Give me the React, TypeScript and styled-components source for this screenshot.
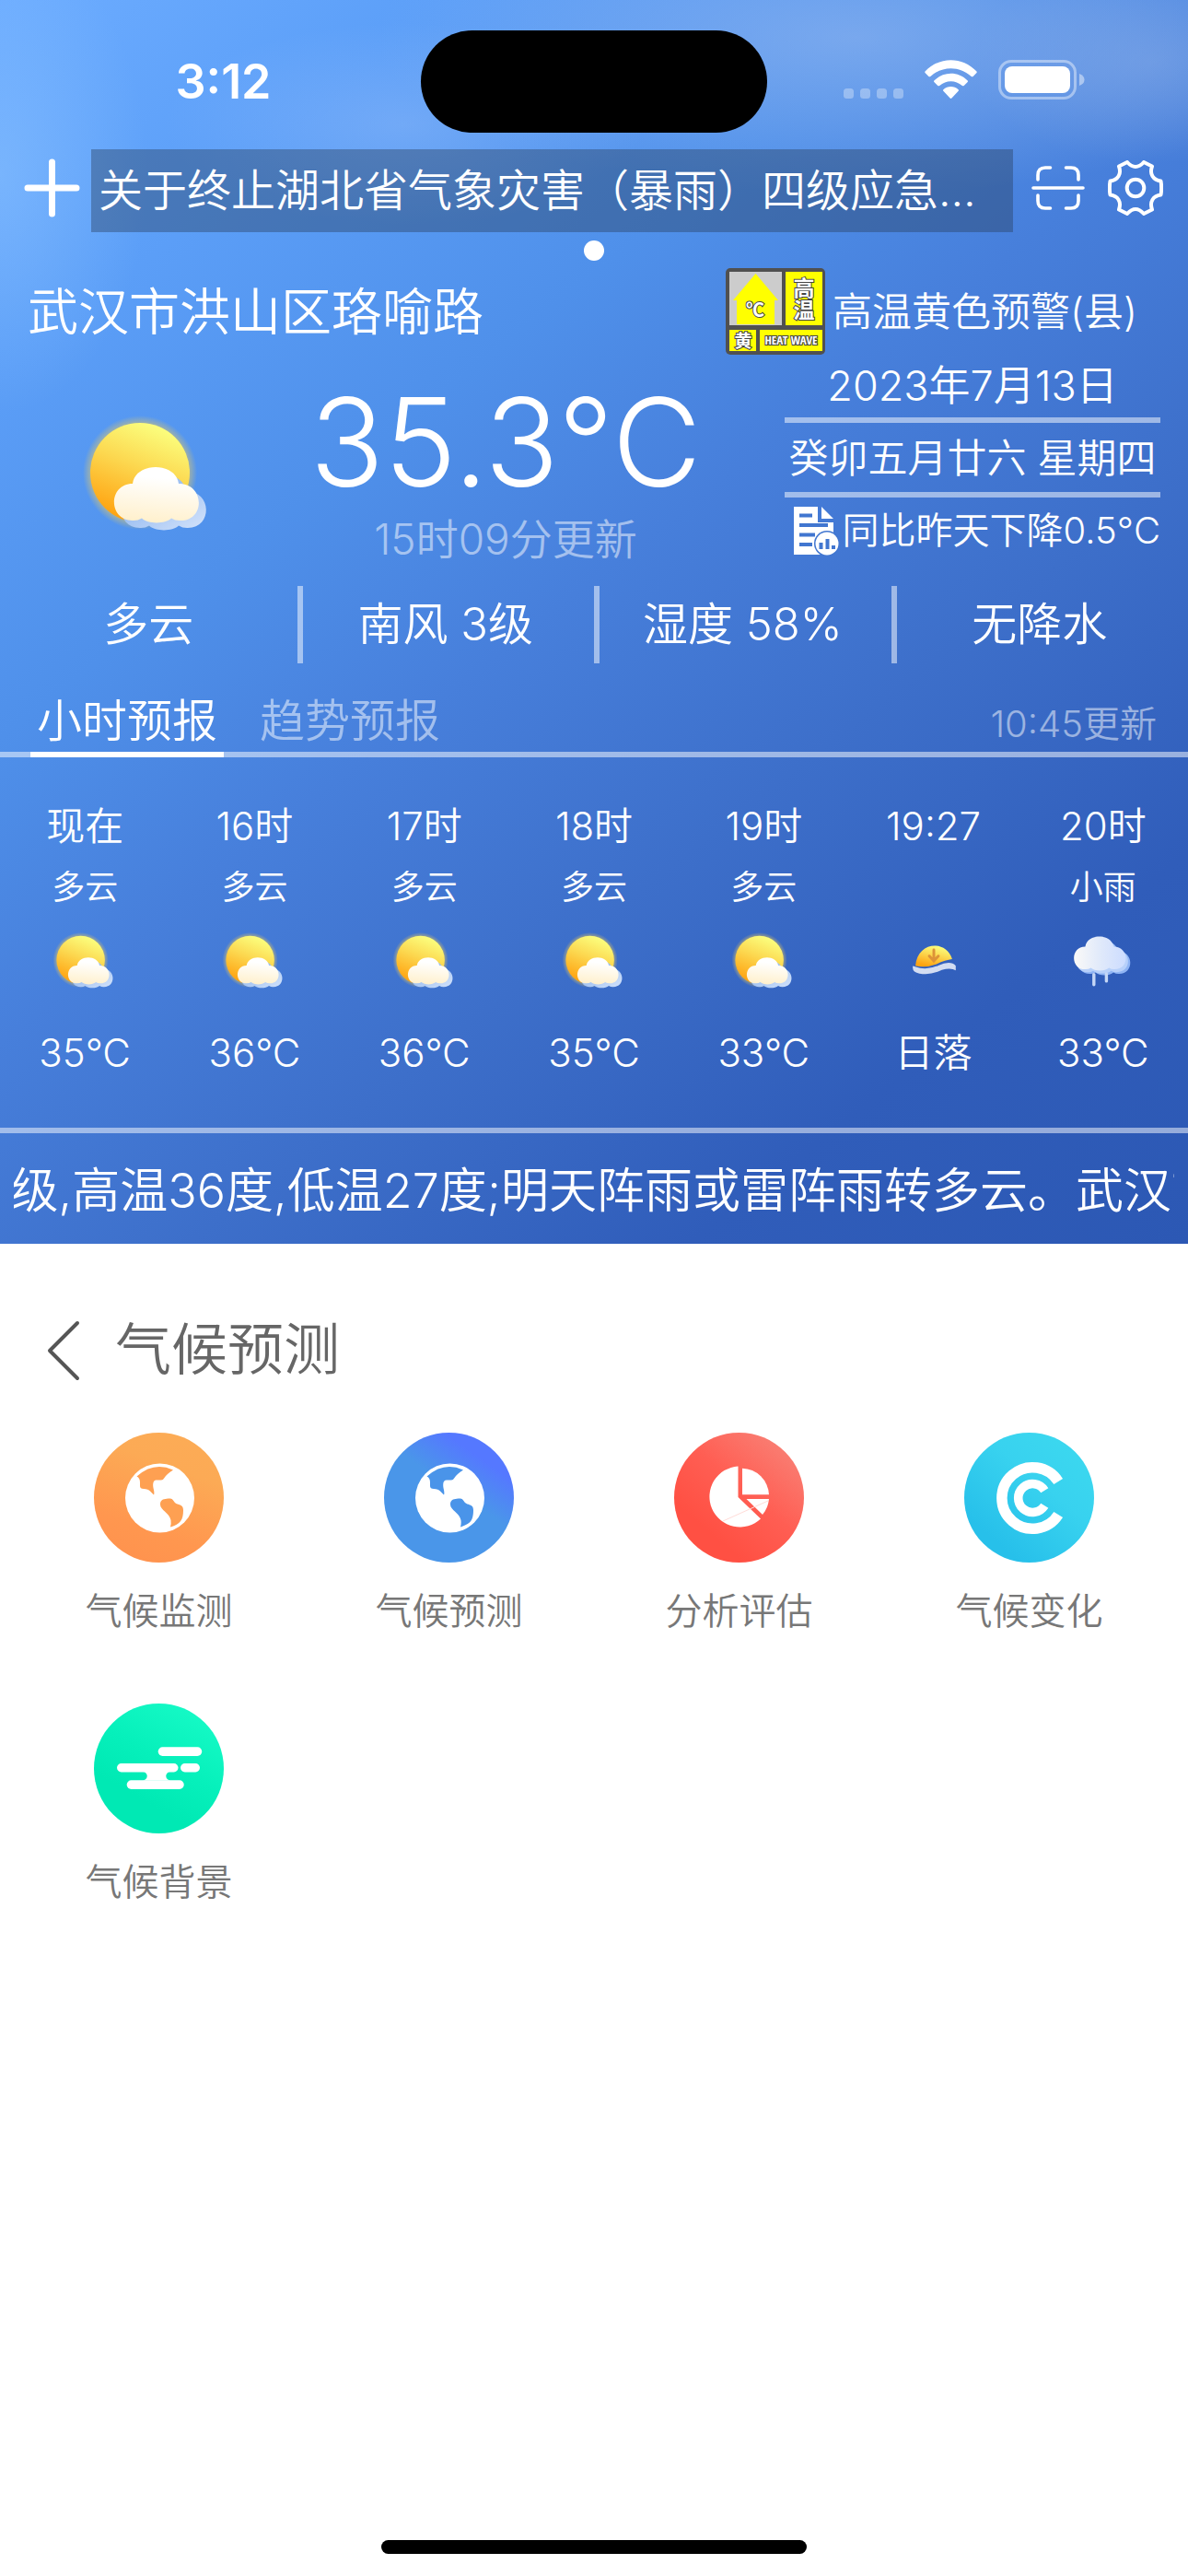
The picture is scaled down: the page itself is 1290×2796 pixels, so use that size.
import React from "react";
import styled, { createGlobalStyle } from "styled-components";

const GlobalStyle = createGlobalStyle`
  *, *::before, *::after { box-sizing: border-box; }
  body {
    margin: 0;
    background: #fff;
    color: #fff;
    font-family: Inter, "Noto Sans CJK SC", sans-serif;
    font-weight: 350;
  }
  button {
    padding: 0;
    border: 0;
    background: none;
    color: inherit;
    font: inherit;
    cursor: pointer;
  }
  a { color: inherit; text-decoration: none; }
  ul { margin: 0; padding: 0; list-style: none; }
  h1, h2, p { margin: 0; font-weight: inherit; }
  svg { display: block; flex: none; }
`;

const rule = "rgba(255, 255, 255, 0.5)";

const Page = styled.div`
  display: flex;
  flex-direction: column;
  min-height: 100vh;
`;

const Hero = styled.header`
  background:
    radial-gradient(ellipse 520px 170px at 72% 3%, rgba(160, 190, 240, 0.5), transparent),
    radial-gradient(ellipse 260px 110px at 34% 10%, rgba(150, 190, 250, 0.4), transparent),
    radial-gradient(ellipse 160px 260px at 0% 14%, rgba(140, 195, 255, 0.5), transparent),
    radial-gradient(ellipse 200px 110px at 97% 5%, rgba(150, 180, 230, 0.35), transparent),
    linear-gradient(142deg, #6cacff 0%, #5c9ff8 16%, #4f90ea 34%, #477fdb 48%, #3d6fca 64%, #305dba 82%, #2c58b4 100%);
`;

const StatusBar = styled.div`
  display: grid;
  grid-template-columns: 1fr 376px 1fr;
  align-items: center;
  height: 162px;
  padding-top: 15px;
`;

const Clock = styled.time`
  padding-left: 28px;
  text-align: center;
  font-size: 52px;
  line-height: 60px;
  font-weight: 600;
`;

const Island = styled.div`
  height: 111px;
  border-radius: 56px;
  background: #000;
`;

const StatusIcons = styled.div`
  display: flex;
  align-items: center;
  margin-bottom: 4px;
  padding-left: 83px;
  gap: 23px;
`;

const Toolbar = styled.nav`
  display: flex;
  align-items: center;
  padding: 0 27px 0 26px;
`;

const IconButton = styled.button<{ $gap: number }>`
  display: flex;
  flex: none;
  margin-left: ${(p) => p.$gap}px;
`;

const ToolButton = styled(IconButton)`
  margin-bottom: 6px;
`;

const Ticker = styled.a`
  flex: 1;
  min-width: 0;
  margin-left: 12px;
  padding: 0 8px;
  overflow: hidden;
  white-space: nowrap;
  text-overflow: ellipsis;
  background: rgba(40, 60, 90, 0.4);
  font-size: 48px;
  line-height: 90px;
`;

const PageDot = styled.div`
  width: 22px;
  height: 22px;
  margin: 9px auto 8px;
  border-radius: 50%;
  background: #fff;
`;

const PlaceRow = styled.div`
  display: flex;
  align-items: center;
  justify-content: space-between;
  padding: 0 55px 0 30px;
`;

const Place = styled.h1`
  font-size: 55px;
  line-height: 94px;
`;

const Alert = styled.a`
  display: flex;
  align-items: center;
  gap: 8px;
  font-size: 43px;
  line-height: 94px;
`;

const Current = styled.section`
  display: grid;
  grid-template-columns: 322px 1fr 408px;
  padding-right: 30px;
`;

const CurrentIcon = styled.div`
  display: flex;
  justify-content: center;
  padding-top: 62px;
`;

const Reading = styled.div`
  padding: 30px 76px 0 0;
  text-align: center;
`;

const Temperature = styled.p`
  font-size: 133px;
  line-height: 130px;
  white-space: nowrap;
`;

const Updated = styled.p`
  font-size: 46px;
  line-height: 80px;
  opacity: 0.5;
`;

const Dates = styled.div`
  text-align: center;
  font-size: 43px;
  white-space: nowrap;
`;

const DateLine = styled.p`
  height: 81px;
  border-bottom: 6px solid ${rule};
  line-height: 76px;

  &:first-child {
    height: 74px;
    font-size: 45px;
    line-height: 68px;
  }
`;

const Compare = styled.p`
  display: flex;
  align-items: center;
  justify-content: flex-end;
  gap: 4px;
  font-size: 40px;
  line-height: 72px;
`;

const Stats = styled.ul`
  display: grid;
  grid-template-columns: repeat(4, 1fr);
  margin-top: 11px;
`;

const Stat = styled.li`
  text-align: center;
  font-size: 49px;
  line-height: 84px;

  & + & {
    padding-right: 6px;
    border-left: 6px solid ${rule};
  }
`;

const Tabs = styled.div`
  display: flex;
  align-items: flex-end;
  margin-top: 30px;
  padding: 0 34px 0 33px;
  gap: 32px;
  box-shadow: inset 0 -6px ${rule};
`;

const Tab = styled.button<{ $active?: boolean }>`
  width: 210px;
  border-bottom: 6px solid ${(p) => (p.$active ? "#fff" : "transparent")};
  color: ${(p) => (p.$active ? "#fff" : rule)};
  font-size: 49px;
  line-height: 66px;
`;

const TabNote = styled.p`
  margin-left: auto;
  color: ${rule};
  font-size: 40px;
  line-height: 72px;
`;

const Hours = styled.ul`
  display: grid;
  grid-template-columns: repeat(7, 1fr);
  padding: 40px 0 46px;
  border-bottom: 6px solid ${rule};
`;

const Hour = styled.li`
  display: flex;
  flex-direction: column;
  align-items: center;
  font-size: 42px;
  line-height: 70px;
  white-space: nowrap;
`;

const Sky = styled.span`
  height: 62px;
  font-size: 36px;
  line-height: 62px;
`;

const HourIcon = styled.span`
  margin: 16px 0 30px;
`;

const Marquee = styled.div`
  display: flex;
  justify-content: center;
  height: 120px;
  margin: 0 15px;
  overflow: hidden;
  white-space: nowrap;
  font-size: 52px;
  line-height: 126px;
`;

const MarqueeText = styled.p`
  padding-left: 14px;
`;

const Climate = styled.main`
  flex: 1;
  color: #777;
`;

const ClimateHead = styled.div`
  display: flex;
  align-items: center;
  gap: 36px;
  padding: 70px 50px 0;
  color: #666;
`;

const ClimateTitle = styled.h2`
  font-size: 61px;
  line-height: 90px;
`;

const Grid = styled.ul`
  display: grid;
  grid-template-columns: repeat(4, 1fr);
  row-gap: 67px;
  padding: 45px 15px;
`;

const GridLink = styled.a`
  display: flex;
  flex-direction: column;
  align-items: center;
  gap: 20px;
  font-size: 40px;
  line-height: 66px;
`;

const Disc = styled.span<{ $fill: string }>`
  display: block;
  border-radius: 50%;
  background: ${(p) => p.$fill};
`;

const HomeBar = styled.div`
  width: 462px;
  height: 15px;
  margin: 0 auto 24px;
  border-radius: 8px;
  background: #000;
`;

function Signal() {
  return (
    <svg width="65" height="43" viewBox="0 0 65 43" fill="#fff" opacity="0.32">
      {[0, 18, 36, 54].map((x) => (
        <rect key={x} x={x} y="31" width="11" height="11" rx="3.5" />
      ))}
    </svg>
  );
}

function Wifi() {
  return (
    <svg width="57" height="43" viewBox="0 0 57 43" fill="#fff">
      <path d="M0.5 12.5C16 -4 41 -4 56.5 12.5Q57 13.3 56.5 14L52.6 18Q51.5 18.6 50.7 18C38 6.2 19 6.2 6.3 18Q5.5 18.6 4.4 18L0.5 14Q0 13.3 0.5 12.5Z" />
      <path d="M10.3 22.5C20.5 12.2 36.5 12.2 46.7 22.5Q47.2 23.2 46.7 24L42.7 28Q41.7 28.7 40.8 28C33.5 21.6 23.5 21.6 16.2 28Q15.3 28.7 14.3 28L10.3 24Q9.8 23.2 10.3 22.5Z" />
      <path d="M20.3 32.3C25 28 32 28 36.7 32.3Q37.3 33 36.7 33.7L29.4 41.5Q28.5 42.4 27.6 41.5L20.3 33.7Q19.7 33 20.3 32.3Z" />
    </svg>
  );
}

function Battery() {
  return (
    <svg width="94" height="43" viewBox="0 0 94 43">
      <rect x="1.5" y="1.5" width="82" height="40" rx="12.5" fill="none" stroke="#fff" strokeWidth="3" opacity="0.42" />
      <rect x="7" y="7" width="71" height="29" rx="8" fill="#fff" />
      <path d="M88 15Q93.5 17 93.5 21.5Q93.5 26 88 28Z" fill="#fff" opacity="0.45" />
    </svg>
  );
}

function PlusIcon() {
  return (
    <svg width="61" height="64" viewBox="0 0 61 64" stroke="#fff" strokeWidth="7" strokeLinecap="round">
      <path d="M30.5 4V60M4 32H57" />
    </svg>
  );
}

function ScanIcon() {
  return (
    <svg width="58" height="50" viewBox="0 0 58 50" fill="none" stroke="#fff" strokeWidth="3.6" strokeLinecap="round">
      <path d="M2 25H56M7 16V11Q7 3 15 3H20.5M37.5 3H43Q51 3 51 11V16M7 33V39Q7 47 15 47H20.5M37.5 47H43Q51 47 51 39V33" />
    </svg>
  );
}

function GearIcon() {
  return (
    <svg width="60" height="60" viewBox="0 0 60 60" fill="none" stroke="#fff" strokeWidth="4" strokeLinejoin="round">
      <path d="M57.5 22.5Q58.8 30 57.5 37.5C49 38.5 45 45 48 53.5L39 58Q30 48 21 58L12 53.5C15 45 11 38.5 2.5 37.5Q1.2 30 2.5 22.5C11 21.5 15 15 12 6.5L21 2Q30 12 39 2L48 6.5C45 15 49 21.5 57.5 22.5Z" />
      <circle cx="30" cy="30" r="9.3" />
    </svg>
  );
}

function HeatBadge() {
  const outlined = {
    fill: "#fff",
    stroke: "#444",
    strokeWidth: 2,
    paintOrder: "stroke",
    textAnchor: "middle" as const,
    fontWeight: 700,
  };
  return (
    <svg width="108" height="94" viewBox="0 0 108 94">
      <rect width="108" height="94" rx="5" fill="#505050" />
      <rect x="4" y="4" width="57" height="58" fill="#ccc" />
      <path d="M32.5 6L57 35H53V61H12V35H8Z" fill="#ff0" />
      <rect x="65" y="4" width="40" height="58" fill="#ff0" />
      <rect x="4" y="67" width="29" height="23" fill="#ff0" />
      <rect x="37" y="67" width="68" height="23" fill="#ff0" />
      <g {...outlined} fontFamily='"Noto Sans CJK SC", sans-serif'>
        <text x="85" y="30" fontSize="23">高</text>
        <text x="85" y="54" fontSize="23">温</text>
        <text x="19" y="86" fontSize="19">黄</text>
        <text x="32" y="53" fontSize="20">℃</text>
      </g>
      <text x="71" y="83" {...outlined} fontSize="13" fontFamily='"Liberation Sans Narrow", "Open Sans Condensed", "Liberation Sans", sans-serif'>
        HEAT WAVE
      </text>
    </svg>
  );
}

function ReportIcon() {
  return (
    <svg width="49" height="53" viewBox="0 0 49 53">
      <path d="M0 0H26V17H43V52H0ZM30 0L43 13H30Z" fill="#fff" />
      <path d="M6 9.5H20M6 20H37M6 30.5H23M6 41H20" stroke="#4176d0" strokeWidth="4" />
      <circle cx="36" cy="40" r="14" fill="#4176d0" />
      <circle cx="36" cy="40" r="12.5" fill="#fff" />
      <path d="M29.5 39V46M36.5 35V46M43 42V46" stroke="#4176d0" strokeWidth="4" />
    </svg>
  );
}

const cloudPath =
  "M53 78C56 54 100 54 103 78C132 78 132 119 104 118Q99 118 95 115.5C88 122 70 122 63 115.5Q59 118 54 118C26 119 26 78 53 78Z";

function PartlyCloudy({ size }: { size: number }) {
  return (
    <svg width={size} height={size} viewBox="0 0 140 140" overflow="visible">
      <defs>
        <linearGradient id="sun" x1="0.7" y1="0" x2="0.3" y2="1">
          <stop offset="0.05" stopColor="#fbfd7c" />
          <stop offset="0.45" stopColor="#fcd850" />
          <stop offset="0.95" stopColor="#ffa412" />
        </linearGradient>
        <linearGradient id="puff" x1="0.6" y1="0" x2="0.45" y2="1">
          <stop offset="0.2" stopColor="#fff" />
          <stop offset="1" stopColor="#fff0cc" />
        </linearGradient>
        <linearGradient id="puffShade" x1="0" y1="0" x2="1" y2="1">
          <stop offset="0.4" stopColor="#9ec0f2" />
          <stop offset="1" stopColor="#d5e4fb" />
        </linearGradient>
        <radialGradient id="glow">
          <stop offset="0.84" stopColor="#ffd34d" stopOpacity="0.5" />
          <stop offset="1" stopColor="#ffd34d" stopOpacity="0" />
        </radialGradient>
      </defs>
      <circle cx="61" cy="66" r="62" fill="url(#glow)" />
      <circle cx="61" cy="66" r="54" fill="url(#sun)" />
      <path d={cloudPath} fill="url(#puffShade)" transform="translate(8 8)" />
      <path d={cloudPath} fill="url(#puff)" />
    </svg>
  );
}

function Sunset() {
  return (
    <svg width="68" height="68" viewBox="0 0 140 140" overflow="visible">
      <path d="M29 79C33 24 98 20 111 64Q96 66 76 75Q52 84 29 79Z" fill="url(#sun)" />
      <path d="M70 43V67M60 57L70 68L80 57" fill="none" stroke="#dd9338" strokeWidth="6" strokeLinecap="round" />
      <path d="M23 82Q22 77 28 81Q54 90 80 78Q108 66 119 79V89Q108 82 88 88Q62 101 38 96Q22 93 23 82Z" fill="#d3ddf2" />
    </svg>
  );
}

function Rain() {
  return (
    <svg width="68" height="68" viewBox="0 0 140 140" overflow="visible">
      <defs>
        <linearGradient id="rainCloud">
          <stop offset="0" stopColor="#fbfaf8" />
          <stop offset="0.45" stopColor="#e3ebfa" />
          <stop offset="1" stopColor="#ccdcff" />
        </linearGradient>
      </defs>
      <g transform="translate(-37 -62) scale(1.26)">
        <path d={cloudPath} fill="#8fb4f4" transform="translate(8 8)" />
        <path d={cloudPath} fill="#b7d0fa" transform="translate(4 5)" />
        <path d={cloudPath} fill="url(#rainCloud)" />
      </g>
      <path d="M49 98V121M77 97V113" stroke="#c5d7f6" strokeWidth="7" strokeLinecap="round" />
    </svg>
  );
}

function Globe({ land }: { land: string }) {
  return (
    <svg width="141" height="141" viewBox="0 0 141 141">
      <circle cx="71.5" cy="71" r="37.5" fill="#fff" />
      <path
        fill={land}
        d="M86 40.5Q65 31 46.5 47.5Q50 49 50 54V58Q50 61 54 61Q59 61 61 63.5L65 67.5Q66 66 64.5 60C63.5 54 65 51.5 68 51.5H73Q75 51.5 76.5 49Q79 45 86 40.5ZM72 78C72 73 75 72 79 71.7C85 71 85 72 88 76C91 79 97 77 97 84C97 95 94 99 83 102.5Q84 99 83.5 95C82 87 72 84 72 78Z"
      />
    </svg>
  );
}

function Pie() {
  return (
    <svg width="141" height="141" viewBox="0 0 141 141" fill="#fff">
      <path d="M69.5 36.5V70L94 93.5A33 33 0 1 1 69.5 36.5Z" />
      <path d="M74 38.7A30 30 0 0 1 103 67.3H74Z" />
      <path d="M78.5 72H103Q102 82 96 89Z" />
      <path d="M53 96L102 74" stroke="#ffdcd8" strokeWidth="1" />
    </svg>
  );
}

function DoubleC() {
  return (
    <svg width="141" height="141" viewBox="0 0 141 141" fill="none" stroke="#fff">
      <path d="M102.2 53A33.3 33.3 0 1 0 102.2 89" strokeWidth="11.5" />
      <path d="M87.3 62.7A15.5 15.5 0 1 0 87.3 79.3" strokeWidth="9.6" />
    </svg>
  );
}

function Mist() {
  return (
    <svg width="141" height="141" viewBox="0 0 141 141" fill="#fff">
      <rect x="69.7" y="47.3" width="47.5" height="9.7" rx="4.8" />
      <rect x="25" y="65" width="66.5" height="9.5" rx="4.7" />
      <rect x="94" y="65" width="21" height="9.5" rx="4.7" />
      <rect x="35.7" y="83.3" width="62" height="9.7" rx="4.8" />
      <path d="M53 74A4.7 4.7 0 0 1 53 83.5H83A4.7 4.7 0 0 1 83 74Z" />
    </svg>
  );
}

const stats = ["多云", "南风 3级", "湿度 58%", "无降水"];

const hours = [
  { time: "现在", sky: "多云", icon: <PartlyCloudy size={68} />, value: "35°C" },
  { time: "16时", sky: "多云", icon: <PartlyCloudy size={68} />, value: "36°C" },
  { time: "17时", sky: "多云", icon: <PartlyCloudy size={68} />, value: "36°C" },
  { time: "18时", sky: "多云", icon: <PartlyCloudy size={68} />, value: "35°C" },
  { time: "19时", sky: "多云", icon: <PartlyCloudy size={68} />, value: "33°C" },
  { time: "19:27", sky: "", icon: <Sunset />, value: "日落" },
  { time: "20时", sky: "小雨", icon: <Rain />, value: "33°C" },
];

const services = [
  { name: "气候监测", fill: "linear-gradient(20deg, #ff914e, #ff974f 30%, #fcaa55 70%, #fcac56)", icon: <Globe land="#fea052" /> },
  { name: "气候预测", fill: "linear-gradient(35deg, #4a96e9 55%, #5578ff 78%)", icon: <Globe land="#4a94e9" /> },
  { name: "分析评估", fill: "linear-gradient(40deg, #ff5043 25%, #ff5e53 55%, #f98075 90%)", icon: <Pie /> },
  { name: "气候变化", fill: "linear-gradient(40deg, #27c0ea 20%, #38d2ef 60%, #3ddaef)", icon: <DoubleC /> },
  { name: "气候背景", fill: "linear-gradient(30deg, #00e9b4 30%, #06f0bb 55%, #16fac6 90%)", icon: <Mist /> },
];

export default function App() {
  return (
    <Page>
      <GlobalStyle />
      <Hero>
        <StatusBar>
          <Clock>3:12</Clock>
          <Island />
          <StatusIcons>
            <Signal />
            <Wifi />
            <Battery />
          </StatusIcons>
        </StatusBar>

        <Toolbar>
          <ToolButton $gap={0} aria-label="添加城市"><PlusIcon /></ToolButton>
          <Ticker href="#notice">关于终止湖北省气象灾害（暴雨）四级应急响应的通知</Ticker>
          <ToolButton $gap={20} aria-label="扫一扫"><ScanIcon /></ToolButton>
          <ToolButton $gap={25} aria-label="设置"><GearIcon /></ToolButton>
        </Toolbar>
        <PageDot />

        <PlaceRow>
          <Place>武汉市洪山区珞喻路</Place>
          <Alert href="#alert">
            <HeatBadge />
            高温黄色预警(县)
          </Alert>
        </PlaceRow>

        <Current>
          <CurrentIcon><PartlyCloudy size={140} /></CurrentIcon>
          <Reading>
            <Temperature>35.3°C</Temperature>
            <Updated>15时09分更新</Updated>
          </Reading>
          <Dates>
            <DateLine>2023年7月13日</DateLine>
            <DateLine>癸卯五月廿六 星期四</DateLine>
            <Compare>
              <ReportIcon />
              同比昨天下降0.5°C
            </Compare>
          </Dates>
        </Current>

        <Stats>
          {stats.map((s) => (
            <Stat key={s}>{s}</Stat>
          ))}
        </Stats>

        <Tabs>
          <Tab $active>小时预报</Tab>
          <Tab>趋势预报</Tab>
          <TabNote>10:45更新</TabNote>
        </Tabs>

        <Hours>
          {hours.map((h) => (
            <Hour key={h.time}>
              <span>{h.time}</span>
              <Sky>{h.sky}</Sky>
              <HourIcon>{h.icon}</HourIcon>
              <span>{h.value}</span>
            </Hour>
          ))}
        </Hours>

        <Marquee>
          <MarqueeText>3级,高温36度,低温27度;明天阵雨或雷阵雨转多云。武汉市</MarqueeText>
        </Marquee>
      </Hero>

      <Climate>
        <ClimateHead>
          <IconButton $gap={0} aria-label="返回">
            <svg width="39" height="68" viewBox="0 0 39 68" fill="none" stroke="#555" strokeWidth="4" strokeLinecap="round" strokeLinejoin="round">
              <path d="M34 5L4 35L34 65" />
            </svg>
          </IconButton>
          <ClimateTitle>气候预测</ClimateTitle>
        </ClimateHead>
        <Grid>
          {services.map((s) => (
            <li key={s.name}>
              <GridLink href={`#${s.name}`}>
                <Disc $fill={s.fill}>{s.icon}</Disc>
                {s.name}
              </GridLink>
            </li>
          ))}
        </Grid>
      </Climate>
      <HomeBar />
    </Page>
  );
}
